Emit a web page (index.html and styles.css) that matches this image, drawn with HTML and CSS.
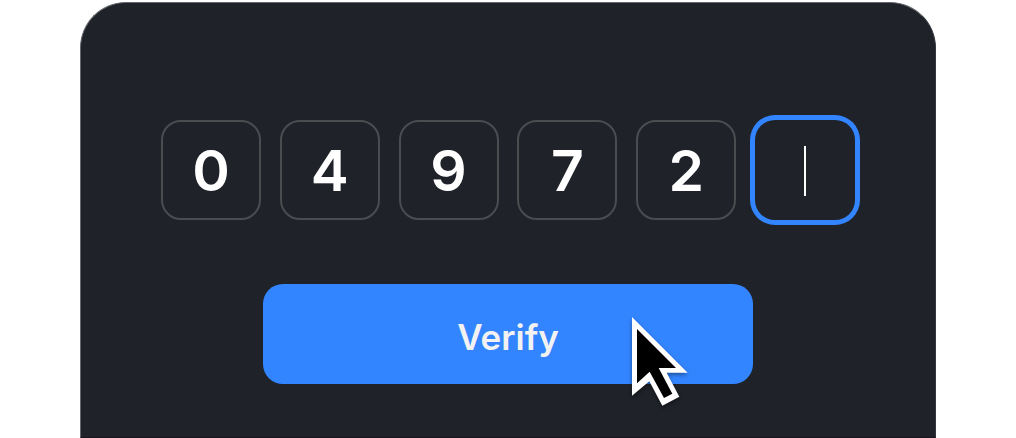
FILE: index.html
```html
<!DOCTYPE html>
<html lang="en">
<head>
<meta charset="utf-8">
<meta name="viewport" content="width=device-width, initial-scale=1">
<title>Verify code</title>
<link rel="stylesheet" href="styles.css">
</head>
<body>
<form class="card">
  <div class="code">
    <input class="digit" type="text" inputmode="numeric" maxlength="1" value="0" aria-label="Digit 1">
    <input class="digit" type="text" inputmode="numeric" maxlength="1" value="4" aria-label="Digit 2">
    <input class="digit" type="text" inputmode="numeric" maxlength="1" value="9" aria-label="Digit 3">
    <input class="digit" type="text" inputmode="numeric" maxlength="1" value="7" aria-label="Digit 4">
    <input class="digit" type="text" inputmode="numeric" maxlength="1" value="2" aria-label="Digit 5">
    <div class="active">
      <input class="digit digit-active" type="text" inputmode="numeric" maxlength="1" aria-label="Digit 6">
      <span class="caret"></span>
    </div>
  </div>
  <div class="action">
    <button class="verify" type="button">Verify</button>
    <svg class="pointer" viewBox="60 44 183 288" aria-hidden="true">
      <path fill="#fff" d="M66 50 L233 217 H170 L208 289 L157 316 L118 243 L66 286 Z"/>
      <path fill="#000" d="M81 86 L198 203 H146 L187 280 L162 293 L119 214 L81 249 Z"/>
    </svg>
  </div>
</form>
</body>
</html>
```
FILE: styles.css
```css
* {
  box-sizing: border-box;
}

body {
  margin: 0;
  padding: 2px 80px 0;
  background: #fff;
  font-family: Inter, "Liberation Sans", sans-serif;
}

.card {
  display: flex;
  flex-direction: column;
  align-items: center;
  gap: 64px;
  min-height: calc(100vh - 2px);
  padding: 117px 80px 52px;
  background: #1f2229;
  border: 1px solid #65686c;
  border-right-color: #34373c;
  border-bottom-color: #17171d;
  border-radius: 46px 46px 0 0;
}

.code {
  display: flex;
  justify-content: space-between;
  width: 100%;
}

.digit {
  display: block;
  width: 100px;
  height: 100px;
  padding: 0;
  background: transparent;
  border: 2px solid #4b4c50;
  border-radius: 20px;
  outline: none;
  color: #fff;
  font: 600 57px/96px Inter, "Liberation Sans", sans-serif;
  text-align: center;
}

.active {
  position: relative;
}

.digit-active {
  border: 0;
  box-shadow: 0 0 0 5px #3385ff;
  caret-color: transparent;
}

.caret {
  position: absolute;
  top: 26px;
  left: 49px;
  width: 2px;
  height: 50px;
  background: #fff;
}

.action {
  position: relative;
  width: 100%;
  max-width: 490px;
}

.verify {
  display: block;
  width: 100%;
  height: 100px;
  padding: 6px 0 0;
  background: #3385ff;
  border: 0;
  border-radius: 20px;
  color: #f2f2f2;
  font: 600 35px/48px Inter, "Liberation Sans", sans-serif;
}

.pointer {
  position: absolute;
  top: 31px;
  right: 62px;
  width: 61px;
  height: 96px;
  filter: drop-shadow(0 2px 2px rgba(0, 0, 0, 0.4));
  pointer-events: none;
}
```
